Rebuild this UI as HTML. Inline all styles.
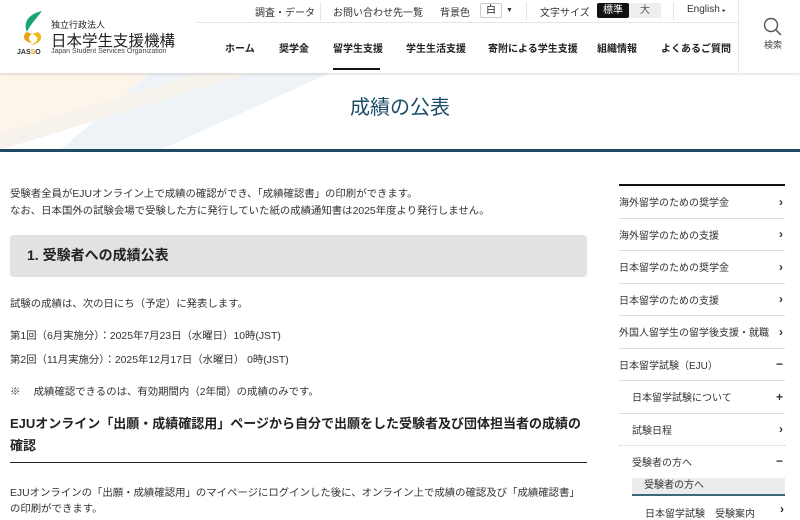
<!DOCTYPE html>
<html><head><meta charset="utf-8"><style>
*{margin:0;padding:0;box-sizing:border-box}
body{width:800px;height:515px;overflow:hidden;background:#fff;font-family:"Liberation Sans","Noto Sans CJK JP",sans-serif;color:#222;position:relative}
.a{position:absolute;white-space:nowrap}
.hdr{position:absolute;left:0;top:0;width:800px;height:73px;background:#fff;box-shadow:0 1px 3px rgba(0,0,0,.15);z-index:2}
.util{font-size:10px;color:#333;top:4px}
.nav{font-size:10px;font-weight:bold;top:40px}
.side{position:absolute;left:619px;width:166px;font-size:10px;color:#333}
.si{height:32.5px;border-bottom:1px solid #ddd;display:flex;align-items:center;justify-content:space-between;padding-right:2px}
.si b{font-weight:bold;font-size:12px}
p.t{position:absolute;left:10px;font-size:10.4px;color:#333;white-space:nowrap}
</style></head><body>
<div class="hdr">
 <svg class="a" style="left:18px;top:10px" width="30" height="38" viewBox="0 0 30 38">
  <path d="M24 1 C10 4 5 13 9 22 C12 15 18 9 24 1Z" fill="#1aa37a"/>
  <path d="M9 22 C3 26 6 32 14 33 C10 30 10 26 14 24Z" fill="#e8a416"/>
  <path d="M14 24 C21 26 22 32 12 35 C21 35 27 27 20 22Z" fill="#f2b51a"/>
 </svg>
 <div class="a" style="left:17px;top:49px;font-size:7px;color:#333;font-weight:bold">JAS<span style="color:#e8a416">S</span>O</div>
 <div class="a" style="left:51px;top:18px;font-size:9px;color:#222">独立行政法人</div>
 <div class="a" style="left:51px;top:29px;font-size:15.5px;color:#222">日本学生支援機構</div>
 <div class="a" style="left:51px;top:48px;font-size:7px;color:#444">Japan Student Services Organization</div>
 <div class="a" style="left:196px;top:22px;width:542px;border-top:1px solid #e5e5e5"></div>
 <div class="a util" style="left:255px">調査・データ</div>
 <div class="a" style="left:320px;top:2px;height:18px;border-left:1px solid #e5e5e5"></div>
 <div class="a util" style="left:333px">お問い合わせ先一覧</div>
 <div class="a util" style="left:440px">背景色</div>
 <div class="a" style="left:480px;top:3px;width:22px;height:15px;border:1px solid #ccc;border-radius:2px;font-size:10px;text-align:center;line-height:13px">白</div>
 <div class="a util" style="left:506px;font-size:7px;top:7px">▼</div>
 <div class="a" style="left:526px;top:2px;height:18px;border-left:1px solid #e5e5e5"></div>
 <div class="a util" style="left:540px">文字サイズ</div>
 <div class="a" style="left:597px;top:3px;width:32px;height:15px;background:#111;color:#fff;border-radius:2px;font-size:10px;text-align:center;line-height:15px">標準</div>
 <div class="a" style="left:629px;top:3px;width:32px;height:15px;background:#eee;color:#555;font-size:10px;text-align:center;line-height:15px">大</div>
 <div class="a" style="left:673px;top:2px;height:18px;border-left:1px solid #e5e5e5"></div>
 <div class="a util" style="left:687px">English <span style="font-size:6px">▸</span></div>
 <div class="a nav" style="left:225px">ホーム</div>
 <div class="a nav" style="left:279px">奨学金</div>
 <div class="a nav" style="left:333px">留学生支援</div>
 <div class="a" style="left:333px;top:68px;width:47px;height:2px;background:#111"></div>
 <div class="a nav" style="left:406px">学生生活支援</div>
 <div class="a nav" style="left:488px">寄附による学生支援</div>
 <div class="a nav" style="left:597px">組織情報</div>
 <div class="a nav" style="left:661px">よくあるご質問</div>
 <div class="a" style="left:738px;top:0;height:73px;border-left:1px solid #e5e5e5"></div>
 <svg class="a" style="left:762px;top:17px" width="22" height="20" viewBox="0 0 22 20"><circle cx="9" cy="8" r="6.5" fill="none" stroke="#555" stroke-width="1.4"/><path d="M13.5 12.5 L19 18" stroke="#555" stroke-width="1.5"/></svg>
 <div class="a" style="left:764px;top:38px;font-size:9px;color:#444">検索</div>
</div>
<div class="a" style="left:0;top:73px;width:800px;height:77px;background:#fff;overflow:hidden">
 <svg width="800" height="77"><polygon points="0,0 330,0 0,60" fill="#fdf5ea"/><polygon points="150,0 330,0 160,77 60,77" fill="#eef3f7"/><polygon points="0,60 200,0 250,0 0,77" fill="#f7f3ec"/></svg>
</div>
<div class="a" style="left:0;top:91px;width:800px;text-align:center;font-size:20px;color:#1b4d6b">成績の公表</div>
<div class="a" style="left:0;top:149px;width:800px;height:3px;background:#1e4a63"></div>

<p class="t" style="top:185px">受験者全員がEJUオンライン上で成績の確認ができ、「成績確認書」の印刷ができます。</p>
<p class="t" style="top:202px">なお、日本国外の試験会場で受験した方に発行していた紙の成績通知書は2025年度より発行しません。</p>
<div class="a" style="left:10px;top:235px;width:577px;height:42px;background:#e2e2e2;border-radius:4px"></div>
<div class="a" style="left:27px;top:245px;font-size:14px;font-weight:bold;color:#222">1. 受験者への成績公表</div>
<p class="t" style="top:295px">試験の成績は、次の日にち（予定）に発表します。</p>
<p class="t" style="top:327px">第1回（6月実施分）：2025年7月23日（水曜日）10時(JST)</p>
<p class="t" style="top:351px">第2回（11月実施分）：2025年12月17日（水曜日） 0時(JST)</p>
<p class="t" style="top:383px">※　 成績確認できるのは、有効期間内（2年間）の成績のみです。</p>
<div class="a" style="left:10px;top:413px;font-size:13px;font-weight:bold;color:#222;line-height:22px;white-space:normal;width:578px">EJUオンライン「出願・成績確認用」ページから自分で出願をした受験者及び団体担当者の成績の確認</div>
<div class="a" style="left:10px;top:462px;width:577px;border-top:1px solid #222"></div>
<p class="t" style="top:484px">EJUオンラインの「出願・成績確認用」のマイページにログインした後に、オンライン上で成績の確認及び「成績確認書」</p>
<p class="t" style="top:500px">の印刷ができます。</p>

<div class="a" style="left:619px;top:184px;width:166px;height:2px;background:#111"></div>
<div class="side" style="top:186px">
 <div class="si"><span>海外留学のための奨学金</span><b>›</b></div>
 <div class="si"><span>海外留学のための支援</span><b>›</b></div>
 <div class="si"><span>日本留学のための奨学金</span><b>›</b></div>
 <div class="si"><span>日本留学のための支援</span><b>›</b></div>
 <div class="si"><span>外国人留学生の留学後支援・就職</span><b>›</b></div>
 <div class="si"><span>日本留学試験（EJU）</span><b>−</b></div>
 <div class="si" style="padding-left:13px"><span>日本留学試験について</span><b>+</b></div>
 <div class="si" style="padding-left:13px;border-bottom:1px dotted #ccc"><span>試験日程</span><b>›</b></div>
 <div class="si" style="padding-left:13px;height:30px;border:none"><span>受験者の方へ</span><b>−</b></div>
</div>
<div class="a" style="left:632px;top:478px;width:153px;height:18px;background:#ececec;border-bottom:2px solid #3d6878;font-size:10px;padding-left:12px;line-height:16px;color:#333">受験者の方へ</div>
<div class="a" style="left:645px;top:505px;font-size:10px;color:#333">日本留学試験　受験案内</div>
<div class="a" style="left:780px;top:502px;font-size:12px;font-weight:bold">›</div>
</body></html>
